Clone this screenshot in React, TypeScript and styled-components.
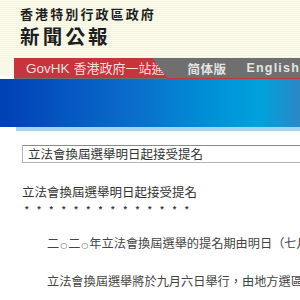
import styled, { createGlobalStyle } from 'styled-components'

const GlobalStyle = createGlobalStyle`
  body {
    margin: 0;
    padding: 0;
    background: #ffffff;
    overflow: hidden;
    font-family: 'Noto Sans CJK TC', 'Noto Sans', sans-serif;
  }
`

const Page = styled.div`
	width: 300px;
	height: 300px;
	overflow: hidden;
`

const Header = styled.header`
	height: 58px;
	box-sizing: border-box;
	padding: 6px 0 0 20px;
	background: repeating-linear-gradient(
		to bottom,
		#fcfcee 0px,
		#fcfcee 1px,
		#f4f4de 1px,
		#f4f4de 2px
	);
	color: #1e1e1e;
`

const Org = styled.div`
	font-size: 13px;
	font-weight: 700;
	line-height: 16px;
	letter-spacing: 2.1px;
	white-space: nowrap;
`

const Title = styled.div`
	margin-top: 1px;
	font-size: 19.5px;
	font-weight: 700;
	line-height: 25px;
	letter-spacing: 3.2px;
`

const Nav = styled.nav`
	display: flex;
	height: 21px;
	background: #6f6f6f;
`

const NavSpacer = styled.div`
	width: 15px;
	background: #f8f8e6;
	border-bottom: 3px solid #ffffff;
	box-sizing: border-box;
`

const GovTab = styled.div`
	width: 163px;
	height: 20px;
	box-sizing: border-box;
	padding-left: 12px;
	background: #c6353b;
	clip-path: polygon(0 0, calc(100% - 15px) 0, 100% 100%, 0 100%);
	color: #f6dede;
	font-size: 13px;
	line-height: 20px;
	white-space: nowrap;
	overflow: hidden;
`

const Latin = styled.span`
	font-family: 'Liberation Sans', sans-serif;
	font-size: 13.5px;
	margin-right: 4px;
`

const LangLinks = styled.div`
	display: flex;
	gap: 20px;
	padding-left: 20px;
	height: 20px;
	border-bottom: 1px solid #c6353b;
	flex: 1;
	align-items: center;
	color: #e4e4e4;
	font-size: 12.5px;
	font-weight: 700;
	white-space: nowrap;
`

const Simplified = styled.span`
	letter-spacing: 0.5px;
`

const English = styled.span`
	font-family: 'Liberation Sans', sans-serif;
	letter-spacing: 1.2px;
`

const Banner = styled.div`
	height: 48px;
	background: linear-gradient(
		to right,
		#0040b6 0%,
		#0a6ecb 45%,
		#0090d6 70%,
		#00a2dc 87%,
		#2a88c6 100%
	);
`

const BannerEdge = styled.div`
	height: 4px;
	margin-left: 16px;
	background: #a6d4f2;
`

const Content = styled.main`
	padding: 14px 0 0 22px;
	color: #333333;
	font-size: 12.5px;
	white-space: nowrap;
`

const SearchBox = styled.div`
	width: 420px;
	height: 18px;
	box-sizing: border-box;
	border: 1px solid #b4b4b4;
	border-top-color: #8a8a8a;
	padding-left: 5px;
	line-height: 16px;
	color: #333333;
`

const Headline = styled.div`
	margin-top: 22px;
	line-height: 14px;
	color: #333333;
`

const Stars = styled.div`
	margin-top: 5px;
	padding-left: 3px;
	font-family: 'Liberation Sans', sans-serif;
	font-size: 9px;
	font-weight: 700;
	line-height: 10px;
	letter-spacing: 8.8px;
	color: #3a3a3a;
`

const Para = styled.p`
	margin: 22px 0 0 25px;
	line-height: 14px;
	color: #444444;
	font-size: 12.2px;
`

const Para2 = styled(Para)`
	margin-top: 21px;
`

const Ring = styled.span`
	font-family: 'DejaVu Sans', sans-serif;
	font-size: 8px;
	margin: 0 1px;
`

function App() {
	return (
		<>
			<GlobalStyle />
			<Page>
				<Header>
					<Org>香港特別行政區政府</Org>
					<Title>新聞公報</Title>
				</Header>
				<Nav>
					<NavSpacer />
					<GovTab>
						<Latin>GovHK</Latin>香港政府一站通
					</GovTab>
					<LangLinks>
						<Simplified>简体版</Simplified>
						<English>English</English>
					</LangLinks>
				</Nav>
				<Banner />
				<BannerEdge />
				<Content>
					<SearchBox>立法會換屆選舉明日起接受提名</SearchBox>
					<Headline>立法會換屆選舉明日起接受提名</Headline>
					<Stars>**************</Stars>
					<Para>
						二<Ring>○</Ring>二<Ring>○</Ring>年立法會換屆選舉的提名期由明日（七月十八日）開始
					</Para>
					<Para2>立法會換屆選舉將於九月六日舉行，由地方選區及功能界別選出</Para2>
				</Content>
			</Page>
		</>
	)
}

export default App
